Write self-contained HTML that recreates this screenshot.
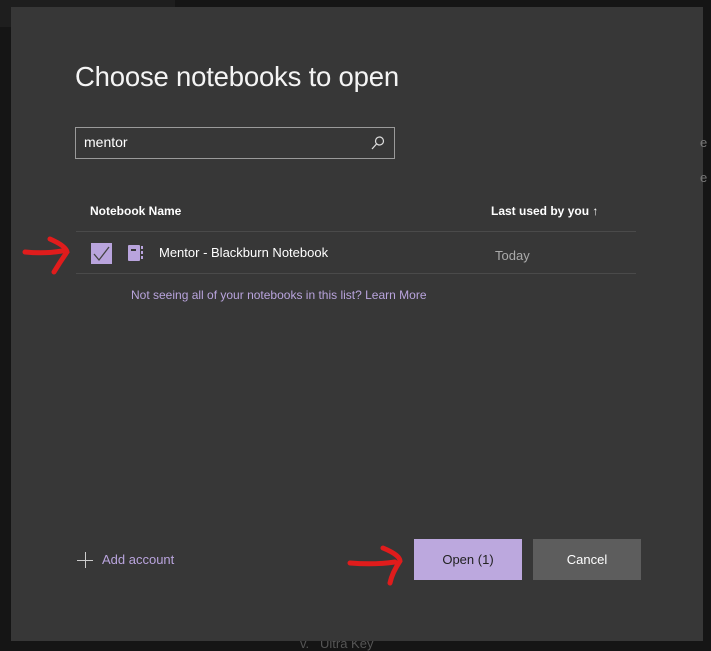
<!DOCTYPE html>
<html><head><style>
body{margin:0;width:711px;height:651px;background:#151515;position:relative;overflow:hidden;font-family:"Liberation Sans",sans-serif;}
.a{position:absolute}
#dlg{left:11px;top:7px;width:692px;height:634px;background:#373737}
</style></head><body>
<div class="a" style="left:0;top:0;width:175px;height:27px;background:#1e1e1e"></div>
<div class="a" style="left:300px;top:636px;color:#555;font-size:13px">v.&nbsp;&nbsp;&nbsp;Ultra Key</div>
<div class="a" id="dlg"></div>
<div class="a" style="left:75px;top:61px;color:#f4f4f4;font-size:27.5px;letter-spacing:-0.2px">Choose notebooks to open</div>
<div class="a" style="left:75px;top:127px;width:318px;height:30px;border:1px solid #9a9a9a"></div>
<div class="a" style="left:84px;top:134px;color:#fff;font-size:14px">mentor</div>
<svg class="a" style="left:370px;top:135px" width="16" height="16"><circle cx="9.5" cy="6" r="4" fill="none" stroke="#ddd" stroke-width="1.2"/><line x1="6.5" y1="9" x2="2" y2="14" stroke="#ddd" stroke-width="1.3"/></svg>
<div class="a" style="left:90px;top:204px;color:#fff;font-size:12px;font-weight:bold">Notebook Name</div>
<div class="a" style="left:491px;top:204px;color:#fff;font-size:12px;font-weight:bold">Last used by you ↑</div>
<div class="a" style="left:76px;top:231px;width:560px;height:1px;background:#4a4a4a"></div>
<div class="a" style="left:76px;top:273px;width:560px;height:1px;background:#4a4a4a"></div>
<div class="a" style="left:91px;top:243px;width:21px;height:21px;background:#b9a4dd"></div>
<svg class="a" style="left:91px;top:243px" width="21" height="21"><polyline points="3,11 8,17 18,4" fill="none" stroke="#444" stroke-width="1.3"/></svg>
<div class="a" style="left:128px;top:245px;width:12px;height:16px;background:#b9a4dd;border-radius:1px"></div>
<div class="a" style="left:131px;top:249px;width:5px;height:2px;background:#373737"></div>
<div class="a" style="left:141px;top:246px;width:2px;height:14px;background:repeating-linear-gradient(#b9a4dd 0 3px,transparent 3px 5px)"></div>
<div class="a" style="left:159px;top:245px;color:#fff;font-size:13px">Mentor - Blackburn Notebook</div>
<div class="a" style="left:495px;top:248px;color:#aaa;font-size:13px">Today</div>
<div class="a" style="left:131px;top:288px;color:#b9a4dd;font-size:12px">Not seeing all of your notebooks in this list? Learn More</div>
<svg class="a" style="left:20px;top:232px" width="55" height="45"><path d="M5,20 Q25,22 42,19 M30,7 Q46,14 47,20 Q40,30 34,40" fill="none" stroke="#e01c1c" stroke-width="5" stroke-linecap="round"/></svg>
<svg class="a" style="left:345px;top:543px" width="65" height="45"><path d="M5,20 Q30,22 50,19 M38,5 Q55,12 55,18 Q47,30 45,40" fill="none" stroke="#e01c1c" stroke-width="5" stroke-linecap="round"/></svg>
<div class="a" style="left:77px;top:560px;width:16px;height:1px;background:#ccc"></div>
<div class="a" style="left:85px;top:552px;width:1px;height:16px;background:#ccc"></div>
<div class="a" style="left:102px;top:552px;color:#b9a4dd;font-size:13px">Add account</div>
<div class="a" style="left:414px;top:539px;width:108px;height:41px;background:#bca8de;color:#222;font-size:13px;text-align:center;line-height:41px">Open (1)</div>
<div class="a" style="left:533px;top:539px;width:108px;height:41px;background:#5d5d5d;color:#fff;font-size:13px;text-align:center;line-height:41px">Cancel</div>
<div class="a" style="left:700px;top:135px;color:#777;font-size:13px">e</div>
<div class="a" style="left:700px;top:170px;color:#777;font-size:13px">e</div>
</body></html>
